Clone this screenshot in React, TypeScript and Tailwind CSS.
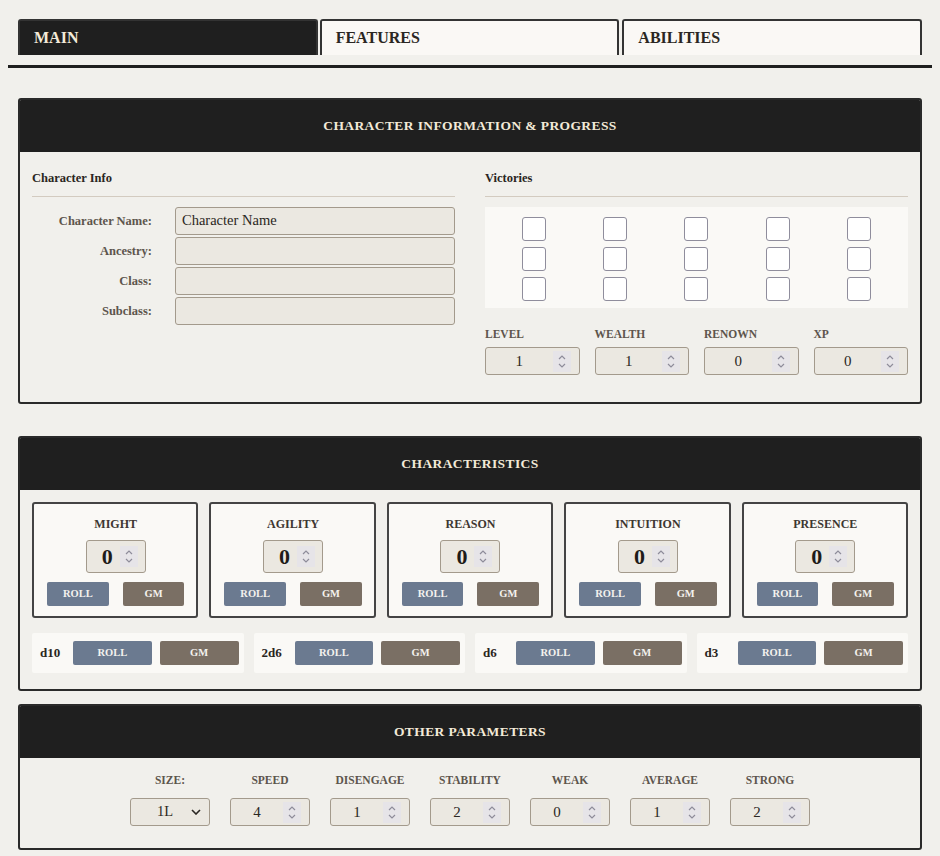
import React from 'react';

const Spinner = () => (
  <svg width="18" height="21" viewBox="0 0 18 21" className="shrink-0">
    <rect width="18" height="21" fill="#e6e4e8" />
    <path d="M6 8 L9 5 L12 8" fill="none" stroke="#8e8c9a" strokeWidth="1.2" />
    <path d="M6 13 L9 16 L12 13" fill="none" stroke="#8e8c9a" strokeWidth="1.2" />
  </svg>
);

const NumBox = ({ value, className = '' }: { value: string; className?: string }) => (
  <div className={`flex items-center h-[28px] bg-[#ebe8e1] border border-[#a39a8c] rounded-[3px] pr-[8px] ${className}`}>
    <span className="flex-1 text-center text-[15px] text-[#2a2622]">{value}</span>
    <Spinner />
  </div>
);

const Panel = ({ title, children, className = '' }: { title: string; children: React.ReactNode; className?: string }) => (
  <section className={`mx-[18px] border-2 border-[#2a2a2a] rounded-[3px] overflow-hidden ${className}`}>
    <div className="h-[52px] bg-[#1f1f1f] flex items-center justify-center">
      <h2 className="text-[13.5px] font-bold tracking-[0.4px] text-[#f3ead8]">{title}</h2>
    </div>
    {children}
  </section>
);

const RollBtn = ({ label, gm }: { label: string; gm?: boolean }) => (
  <button
    className={`h-[24px] rounded-[2px] text-[10.5px] font-bold text-[#f4f2ee] ${gm ? 'bg-[#7a6f64]' : 'bg-[#6b7a90]'}`}
  >
    {label}
  </button>
);

export default function App() {
  const info = ['Character Name:', 'Ancestry:', 'Class:', 'Subclass:'];
  const stats = ['MIGHT', 'AGILITY', 'REASON', 'INTUITION', 'PRESENCE'];
  const dice = ['d10', '2d6', 'd6', 'd3'];
  const progress = [
    ['LEVEL', '1'],
    ['WEALTH', '1'],
    ['RENOWN', '0'],
    ['XP', '0'],
  ];
  const params = [
    ['SPEED', '4'],
    ['DISENGAGE', '1'],
    ['STABILITY', '2'],
    ['WEAK', '0'],
    ['AVERAGE', '1'],
    ['STRONG', '2'],
  ];

  return (
    <div className="[font-family:'Liberation_Serif',serif] min-h-[856px] bg-[#f1f0ec] pt-[19px] text-[#2a2622]">
      {/* tabs */}
      <div className="mx-[8px] border-b-[3px] border-[#1f1f1f] pb-[10px]">
        <div className="flex gap-[2px] px-[10px]">
          {['MAIN', 'FEATURES', 'ABILITIES'].map((t, i) => (
            <div
              key={t}
              className={`w-[300px] h-[36px] border-2 border-b-0 border-[#333] rounded-t-[3px] flex items-center pl-[14px] text-[16px] font-bold ${
                i === 0 ? 'bg-[#1f1f1f] text-[#f3ead8]' : 'bg-[#faf8f5] text-[#2a2622]'
              } ${i === 2 ? 'ml-px' : ''}`}
            >
              {t}
            </div>
          ))}
        </div>
      </div>

      {/* character info */}
      <Panel title="CHARACTER INFORMATION & PROGRESS" className="mt-[30px]">
        <div className="grid grid-cols-2 gap-[30px] px-[12px] pt-[14px] pb-[27px]">
          <div>
            <h3 className="text-[12.5px] font-bold leading-[24px] pb-[6px] border-b border-[#d3cbc0]">Character Info</h3>
            <div className="mt-[10px] flex flex-col gap-[2px]">
              {info.map((l, i) => (
                <div key={l} className="flex items-center gap-[23px]">
                  <label className="w-[120px] text-right text-[12.5px] font-bold text-[#5d554c]">{l}</label>
                  <div className="flex-1 h-[28px] bg-[#ebe8e1] border border-[#a39a8c] rounded-[3px] px-[6px] flex items-center text-[14.5px] text-[#2a2622]">
                    {i === 0 ? 'Character Name' : ''}
                  </div>
                </div>
              ))}
            </div>
          </div>
          <div>
            <h3 className="text-[12.5px] font-bold leading-[24px] pb-[6px] border-b border-[#d3cbc0]">Victories</h3>
            <div className="mt-[10px] bg-[#faf9f6] px-[8px] pt-[10px] pb-[7px] grid grid-cols-5 gap-y-[6px] justify-items-center">
              {Array.from({ length: 15 }).map((_, i) => (
                <div key={i} className="w-[24px] h-[24px] bg-white border border-[#8f8d9c] rounded-[3px]" />
              ))}
            </div>
            <div className="mt-[18px] grid grid-cols-4 gap-[15px]">
              {progress.map(([l, v]) => (
                <div key={l}>
                  <div className="text-[11.5px] font-bold text-[#5d554c] leading-[16px]">{l}</div>
                  <NumBox value={v} className="mt-[5px]" />
                </div>
              ))}
            </div>
          </div>
        </div>
      </Panel>

      {/* characteristics */}
      <Panel title="CHARACTERISTICS" className="mt-[32px]">
        <div className="px-[12px] pt-[12px] pb-[16px]">
          <div className="grid grid-cols-5 gap-[11px]">
            {stats.map((s) => (
              <div key={s} className="bg-[#faf9f6] border-2 border-[#444] rounded-[3px] pt-[12px] pb-[10px] pl-[13px] pr-[12px] flex flex-col items-center">
                <div className="text-[12px] font-bold text-[#3d3731] leading-[16px]">{s}</div>
                <div className="mt-[8px] w-[60px] h-[33px] shrink-0 bg-[#ebe8e1] border border-[#a39a8c] rounded-[3px] flex items-center pl-[15px] gap-[7px]">
                  <span className="text-[22px] font-bold text-[#1f1c19] leading-none">0</span>
                  <Spinner />
                </div>
                <div className="mt-[9px] w-full grid grid-cols-2 gap-[14px]">
                  <RollBtn label="ROLL" />
                  <RollBtn label="GM" gm />
                </div>
              </div>
            ))}
          </div>
          <div className="mt-[15px] grid grid-cols-4 gap-[10px]">
            {dice.map((d) => (
              <div key={d} className="h-[40px] bg-[#faf9f6] rounded-[2px] flex items-center pl-[8px] pr-[5px]">
                <span className="w-[33px] text-[13px] font-bold text-[#2a2622]">{d}</span>
                <div className="flex-1 grid grid-cols-2 gap-[8px]">
                  <RollBtn label="ROLL" />
                  <RollBtn label="GM" gm />
                </div>
              </div>
            ))}
          </div>
        </div>
      </Panel>

      {/* other parameters */}
      <Panel title="OTHER PARAMETERS" className="mt-[13px]">
        <div className="flex justify-center gap-[20px] pt-[14px] pb-[22px]">
          <div className="w-[80px] flex flex-col items-center">
            <div className="text-[11.5px] font-bold text-[#5d554c] leading-[16px]">SIZE:</div>
            <div className="mt-[10px] w-[80px] h-[28px] bg-[#ebe8e1] border border-[#a39a8c] rounded-[3px] flex items-center pl-[26px] pr-[8px]">
              <span className="flex-1 text-[14.5px]">1L</span>
              <svg width="10" height="6" viewBox="0 0 10 6">
                <path d="M1 1 L5 5 L9 1" fill="none" stroke="#2a2622" strokeWidth="1.6" />
              </svg>
            </div>
          </div>
          {params.map(([l, v]) => (
            <div key={l} className="w-[80px] flex flex-col items-center">
              <div className="text-[11.5px] font-bold text-[#5d554c] leading-[16px]">{l}</div>
              <NumBox value={v} className="mt-[10px] w-[80px]" />
            </div>
          ))}
        </div>
      </Panel>
    </div>
  );
}
